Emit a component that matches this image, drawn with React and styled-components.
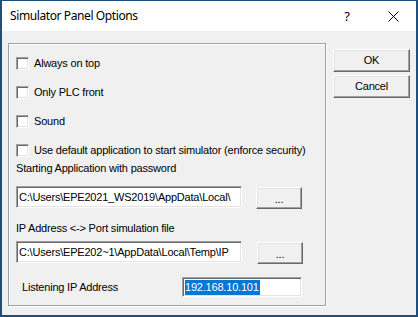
import React from "react";
import styled, { createGlobalStyle } from "styled-components";

const Global = createGlobalStyle`
  html, body { margin: 0; padding: 0; background: #f0f0f0; }
  * { box-sizing: border-box; }
`;

const Window = styled.div`
  width: 418px;
  height: 317px;
  border: 2px solid #1e4e7c;
  border-top-width: 1px;
  display: flex;
  flex-direction: column;
  background: #f0f0f0;
  font-family: "Liberation Sans", Arial, sans-serif;
  font-size: 11px;
  letter-spacing: -0.2px;
  color: #000;
  overflow: hidden;
`;

const TitleBar = styled.div`
  height: 30px;
  flex: none;
  background: #fff;
  display: flex;
  align-items: center;
  padding-left: 8px;
  font-family: "Noto Sans", "Open Sans", sans-serif;
  font-size: 12px;
  letter-spacing: -0.4px;
  color: #000;
`;

const Title = styled.div`
  flex: 1;
  padding-bottom: 1px;
`;

const TitleButton = styled.div`
  width: ${(p) => p.w}px;
  height: 29px;
  display: flex;
  align-items: center;
  justify-content: center;
  font-family: "Noto Sans", sans-serif;
  font-size: 13px;
  letter-spacing: 0;
`;

const Body = styled.div`
  flex: 1;
  display: flex;
  padding: 12px 0 0 6px;
`;

const Group = styled.div`
  width: 318px;
  height: 263px;
  border: 1px solid #a0a0a0;
  box-shadow: 1px 1px 0 #fff, inset 1px 1px 0 #fff;
  padding: 13px 0 0 7px;
  display: flex;
  flex-direction: column;
`;

const CheckRow = styled.label`
  display: flex;
  align-items: center;
  height: 13px;
  line-height: 13px;
  margin-bottom: 16px;
  &:last-of-type { margin-bottom: 0; }
`;

const Box = styled.span`
  width: 13px;
  height: 13px;
  flex: none;
  background: #fff;
  border-top: 1px solid #a0a0a0;
  border-left: 1px solid #a0a0a0;
  border-right: 1px solid #fff;
  border-bottom: 1px solid #fff;
  box-shadow: inset 1px 1px 0 #696969, inset -1px -1px 0 #e3e3e3;
  margin-right: 5px;
`;

const Label = styled.div`
  height: 13px;
  line-height: 13px;
  margin-top: ${(p) => p.mt}px;
  white-space: nowrap;
`;

const FieldRow = styled.div`
  display: flex;
  align-items: flex-start;
  margin-top: ${(p) => p.mt}px;
  gap: ${(p) => p.gap}px;
`;

const Field = styled.div`
  width: ${(p) => p.w}px;
  height: ${(p) => p.h}px;
  flex: none;
  background: #fff;
  border-top: 1px solid #a0a0a0;
  border-left: 1px solid #a0a0a0;
  border-right: 1px solid #fff;
  border-bottom: 1px solid #fff;
  box-shadow: inset 1px 1px 0 #696969, inset -1px -1px 0 #e3e3e3;
  padding: 0 2px;
  display: flex;
  align-items: center;
  overflow: hidden;
  white-space: nowrap;
  line-height: 13px;
`;

const Selected = styled.span`
  background: #0078d7;
  color: #fff;
  line-height: 15px;
  padding: 0 1px 0 0;
`;

const Button = styled.div`
  width: ${(p) => p.w}px;
  height: ${(p) => p.h}px;
  flex: none;
  margin-top: ${(p) => p.mt || 0}px;
  background: #f0f0f0;
  border-top: 1px solid #fff;
  border-left: 1px solid #fff;
  border-right: 1px solid #696969;
  border-bottom: 1px solid #696969;
  box-shadow: inset -1px -1px 0 #a0a0a0, inset 1px 1px 0 #e3e3e3;
  display: flex;
  align-items: center;
  justify-content: center;
  line-height: 13px;
`;

const Dots = styled.span`
  padding-top: ${(p) => p.pt || 0}px;
`;

const IPRow = styled.div`
  display: flex;
  align-items: center;
  margin-top: 13px;
  padding-left: 6px;
`;

const IPLabel = styled.div`
  width: 160px;
  line-height: 13px;
  padding-top: 1px;
`;

const ButtonColumn = styled.div`
  display: flex;
  flex-direction: column;
  gap: 3px;
  padding: 6px 0 0 7px;
`;

export default function App() {
  return (
    <>
      <Global />
      <Window>
        <TitleBar>
          <Title>Simulator Panel Options</Title>
          <TitleButton w={46}>?</TitleButton>
          <TitleButton w={46}>
            <svg width="11" height="11" viewBox="0 0 11 11">
              <path d="M0.5 0.5 L10.5 10.5 M10.5 0.5 L0.5 10.5" stroke="#000" strokeWidth="1" fill="none" />
            </svg>
          </TitleButton>
        </TitleBar>
        <Body>
          <Group>
            <CheckRow><Box />Always on top</CheckRow>
            <CheckRow><Box />Only PLC front</CheckRow>
            <CheckRow><Box />Sound</CheckRow>
            <CheckRow><Box />Use default application to start simulator (enforce security)</CheckRow>
            <Label mt={5}>Starting Application with password</Label>
            <FieldRow mt={11} gap={14}>
              <Field w={226} h={22}>C:\Users\EPE2021_WS2019\AppData\Local\</Field>
              <Button w={46} h={22} mt={1}><Dots pt={3}>...</Dots></Button>
            </FieldRow>
            <Label mt={13}>IP Address &lt;-&gt; Port simulation file</Label>
            <FieldRow mt={6} gap={15}>
              <Field w={226} h={22}>C:\Users\EPE202~1\AppData\Local\Temp\IP</Field>
              <Button w={46} h={22} mt={1}><Dots pt={3}>...</Dots></Button>
            </FieldRow>
            <IPRow>
              <IPLabel>Listening IP Address</IPLabel>
              <Field w={120} h={20}><Selected>192.168.10.101</Selected></Field>
            </IPRow>
          </Group>
          <ButtonColumn>
            <Button w={77} h={23}>OK</Button>
            <Button w={77} h={23}>Cancel</Button>
          </ButtonColumn>
        </Body>
      </Window>
    </>
  );
}
